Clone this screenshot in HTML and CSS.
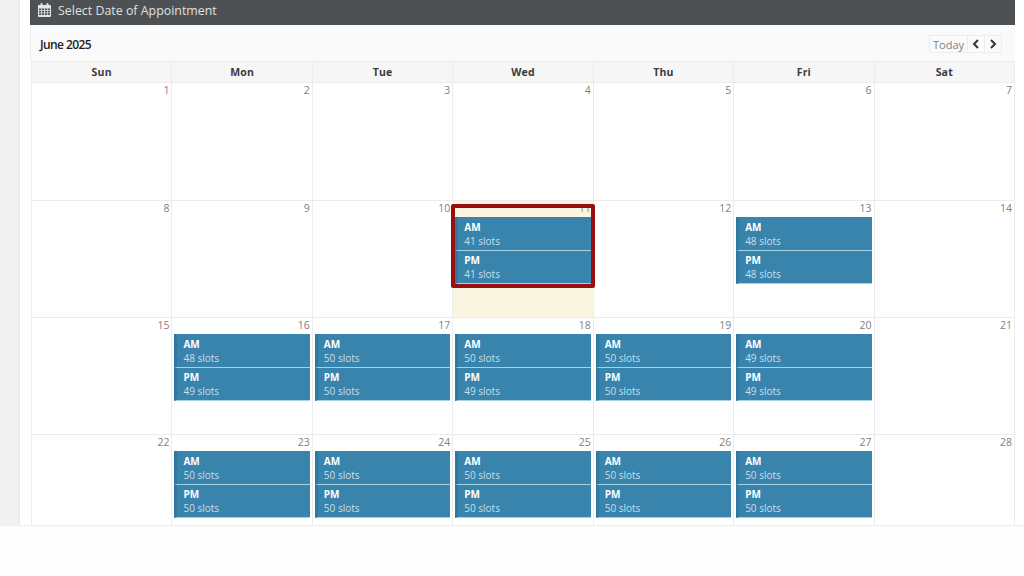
FILE: index.html
```html
<!DOCTYPE html>
<html lang="en">
<head>
    <meta charset="UTF-8">
    <meta name="viewport" content="width=device-width, initial-scale=1.0">
    <title>Select Date of Appointment</title>
    <link rel="stylesheet" href="styles.css">
</head>
<body>
    <div class="page">
        <div class="gutter"></div>
        <div class="panel">
            <div class="panel-title">
                <svg class="cal-icon" width="13" height="14" viewBox="0 0 13 14">
                    <path fill="#e4e6e6" fill-rule="evenodd" d="M1 2h1.5V1a1 1 0 0 1 2 0v1h4V1a1 1 0 0 1 2 0v1H12a1 1 0 0 1 1 1v10a1 1 0 0 1-1 1H1a1 1 0 0 1-1-1V3a1 1 0 0 1 1-1zM1 5.500v1.500h2V5.500zM3.700 5.500v1.500h2.400V5.500zM6.900 5.500v1.500h2.400V5.500zM10 5.500v1.500h2V5.500zM1 7.800v1.600h2V7.800zM3.700 7.800v1.600h2.400V7.800zM6.900 7.800v1.600h2.400V7.800zM10 7.800v1.600h2V7.800zM1 10.200V12h2v-1.800zM3.700 10.200V12h2.400v-1.800zM6.900 10.200V12h2.400v-1.800zM10 10.200V12h2v-1.800z"/>
                </svg>
                <span>Select Date of Appointment</span>
            </div>
            <div class="toolbar">
                <div class="month">June 2025</div>
                <div class="nav">
                    <button class="today">Today</button>
                    <button class="arrow">
                        <svg width="8" height="10" viewBox="0 0 8 10"><path d="M6 1L2 5l4 4" fill="none" stroke="#333" stroke-width="2"/></svg>
                    </button>
                    <button class="arrow">
                        <svg width="8" height="10" viewBox="0 0 8 10"><path d="M2 1l4 4-4 4" fill="none" stroke="#333" stroke-width="2"/></svg>
                    </button>
                </div>
            </div>
            <div class="days">
                <div>Sun</div><div>Mon</div><div>Tue</div><div>Wed</div><div>Thu</div><div>Fri</div><div>Sat</div>
            </div>
            <div class="week first">
                <div class="cell"><div class="date">1</div></div>
                <div class="cell"><div class="date">2</div></div>
                <div class="cell"><div class="date">3</div></div>
                <div class="cell"><div class="date">4</div></div>
                <div class="cell"><div class="date">5</div></div>
                <div class="cell"><div class="date">6</div></div>
                <div class="cell"><div class="date">7</div></div>
            </div>
            <div class="week">
                <div class="cell"><div class="date">8</div></div>
                <div class="cell"><div class="date">9</div></div>
                <div class="cell"><div class="date">10</div></div>
                <div class="cell today-cell">
                    <div class="date">11</div>
                    <div class="slot"><b>AM</b><span>41 slots</span></div>
                    <div class="slot"><b>PM</b><span>41 slots</span></div>
                    <div class="picked"></div>
                </div>
                <div class="cell"><div class="date">12</div></div>
                <div class="cell">
                    <div class="date">13</div>
                    <div class="slot"><b>AM</b><span>48 slots</span></div>
                    <div class="slot"><b>PM</b><span>48 slots</span></div>
                </div>
                <div class="cell"><div class="date">14</div></div>
            </div>
            <div class="week">
                <div class="cell"><div class="date">15</div></div>
                <div class="cell">
                    <div class="date">16</div>
                    <div class="slot"><b>AM</b><span>48 slots</span></div>
                    <div class="slot"><b>PM</b><span>49 slots</span></div>
                </div>
                <div class="cell">
                    <div class="date">17</div>
                    <div class="slot"><b>AM</b><span>50 slots</span></div>
                    <div class="slot"><b>PM</b><span>50 slots</span></div>
                </div>
                <div class="cell">
                    <div class="date">18</div>
                    <div class="slot"><b>AM</b><span>50 slots</span></div>
                    <div class="slot"><b>PM</b><span>49 slots</span></div>
                </div>
                <div class="cell">
                    <div class="date">19</div>
                    <div class="slot"><b>AM</b><span>50 slots</span></div>
                    <div class="slot"><b>PM</b><span>50 slots</span></div>
                </div>
                <div class="cell">
                    <div class="date">20</div>
                    <div class="slot"><b>AM</b><span>49 slots</span></div>
                    <div class="slot"><b>PM</b><span>49 slots</span></div>
                </div>
                <div class="cell"><div class="date">21</div></div>
            </div>
            <div class="week">
                <div class="cell"><div class="date">22</div></div>
                <div class="cell">
                    <div class="date">23</div>
                    <div class="slot"><b>AM</b><span>50 slots</span></div>
                    <div class="slot"><b>PM</b><span>50 slots</span></div>
                </div>
                <div class="cell">
                    <div class="date">24</div>
                    <div class="slot"><b>AM</b><span>50 slots</span></div>
                    <div class="slot"><b>PM</b><span>50 slots</span></div>
                </div>
                <div class="cell">
                    <div class="date">25</div>
                    <div class="slot"><b>AM</b><span>50 slots</span></div>
                    <div class="slot"><b>PM</b><span>50 slots</span></div>
                </div>
                <div class="cell">
                    <div class="date">26</div>
                    <div class="slot"><b>AM</b><span>50 slots</span></div>
                    <div class="slot"><b>PM</b><span>50 slots</span></div>
                </div>
                <div class="cell">
                    <div class="date">27</div>
                    <div class="slot"><b>AM</b><span>50 slots</span></div>
                    <div class="slot"><b>PM</b><span>50 slots</span></div>
                </div>
                <div class="cell"><div class="date">28</div></div>
            </div>
        </div>
    </div>
</body>
</html>
```

FILE: styles.css
```css
html, body {
    margin: 0;
    padding: 0;
    height: 576px;
    overflow: hidden;
    background-color: #fdfdfd;
    font-family: "Open Sans", "Liberation Sans", sans-serif;
}
.page {
    display: flex;
    height: 525px;
    overflow: hidden;
    background-color: #fff;
    border-bottom: 1px solid #eeeeea;
}
.gutter {
    width: 19px;
    flex: none;
    background-color: #f1f1f1;
    border-right: 1px solid #e8e8e8;
}
.panel {
    width: 985px;
    margin-left: 10px;
    flex: none;
}
.panel-title {
    display: flex;
    align-items: center;
    gap: 7px;
    height: 25px;
    padding: 0 0 5px 8px;
    box-sizing: border-box;
    background-color: #4d5154;
    color: #dfe1e1;
    font-size: 12.400px;
}
.toolbar {
    display: flex;
    justify-content: space-between;
    align-items: center;
    height: 36px;
    padding: 1px 13px 0 9px;
    box-sizing: border-box;
    background-color: #fafafa;
    border-left: 1px solid #eee;
}
.month {
    font-size: 12px;
    font-weight: 600;
    letter-spacing: -0.6px;
    color: #222;
    padding-top: 2px;
}
.nav {
    display: flex;
    height: 18px;
    padding-top: 1px;
}
.nav button {
    margin: 0;
    padding: 0;
    display: flex;
    align-items: center;
    justify-content: center;
    background-color: #fbfbfb;
    border: 1px solid #ededed;
    font-family: inherit;
}
.today {
    width: 39px;
    font-size: 11px;
    color: #808080;
}
.arrow {
    width: 17px;
    border-left: none !important;
}
.days, .week {
    display: grid;
    grid-template-columns: repeat(7, 1fr);
    margin-left: 1px;
    border-left: 1px solid #ececec;
}
.days {
    height: 22px;
    background-color: #f6f6f6;
    border-top: 1px solid #ececec;
    border-bottom: 1px solid #ececec;
    box-sizing: border-box;
    font-size: 10.500px;
    font-weight: 700;
    line-height: 20px;
    letter-spacing: 0.2px;
    text-align: center;
    color: #3a3a3a;
}
.days div {
    border-right: 1px solid #ececec;
}
.week {
    height: 117px;
    box-sizing: border-box;
    border-bottom: 1px solid #ececec;
}
.week.first {
    height: 118px;
}
.cell {
    position: relative;
    min-width: 0;
    border-right: 1px solid #ececec;
}
.today-cell {
    background-color: #fbf6e2;
}
.date {
    height: 16px;
    padding-right: 2px;
    font-size: 10.500px;
    line-height: 15px;
    text-align: right;
    color: #808080;
}
.slot {
    display: flex;
    flex-direction: column;
    justify-content: center;
    height: 33.500px;
    box-sizing: border-box;
    margin: 0 2px;
    padding: 1px 0 0 6px;
    background-color: #3884ad;
    border-left: 3px solid #2f79a1;
    border-bottom: 1px solid #a5d3e4;
    color: #c9dfea;
    font-size: 10px;
    line-height: 14px;
}
.slot b {
    color: #fff;
    font-weight: 700;
}
.picked {
    position: absolute;
    left: -2px;
    right: -2px;
    top: 3px;
    height: 84px;
    box-sizing: border-box;
    border: 4px solid #990f0f;
    border-radius: 2px;
}
```
